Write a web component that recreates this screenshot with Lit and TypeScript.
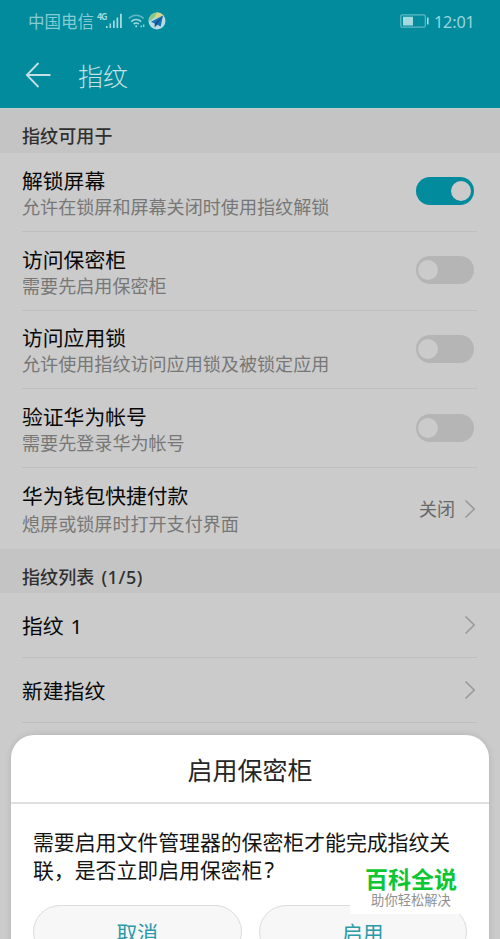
import { LitElement, html, css, nothing } from "lit";
import { customElement, property } from "lit/decorators.js";

@customElement("toggle-switch")
class ToggleSwitch extends LitElement {
  @property({ type: Boolean, reflect: true }) on = false;
  static styles = css`
    :host { display: flex; align-items: center; box-sizing: border-box; width: 58.5px; height: 28px; padding: 0 3px 0 2px; border-radius: 14px; background: #b5b5b5; }
    :host([on]) { justify-content: flex-end; background: #018b9d; }
    .knob { width: 20px; height: 20px; border-radius: 50%; background: #cbcbcb; }
  `;
  render() { return html`<div class="knob"></div>`; }
}

@customElement("setting-row")
class SettingRow extends LitElement {
  @property() heading = "";
  @property() detail = "";
  @property() value = "";
  @property() kind = "link";
  @property({ type: Boolean }) checked = false;
  static styles = css`
    :host { display: flex; box-sizing: border-box; margin: 0 23px 0 22px; border-bottom: 1.5px solid #bebebe; align-items: center; }
    .text { flex: 1; white-space: nowrap; padding-top: 2px; }
    .heading { font-size: 20.8px; line-height: 28px; color: #080808; word-spacing: 1.5px; }
    .detail { font-size: 18.08px; line-height: 24px; color: #777; }
    :host(.wallet) .text { padding-top: 3px; }
    :host(.wallet) .detail { line-height: 28px; }
    .value { font-size: 18px; line-height: 24px; color: #686868; margin-right: 9px; }
    toggle-switch { margin: 0 3px 1px 0; }
    svg { display: block; margin-right: 1px; }
  `;
  render() {
    return html`
      <div class="text">
        <div class="heading">${this.heading}</div>
        ${this.detail ? html`<div class="detail">${this.detail}</div>` : nothing}
      </div>
      ${this.value ? html`<div class="value">${this.value}</div>` : nothing}
      ${this.kind === "toggle"
        ? html`<toggle-switch ?on=${this.checked}></toggle-switch>`
        : html`<svg width="12" height="20" viewBox="0 0 12 20" fill="none" stroke="#9a9a9a" stroke-width="1.7"><path d="M1.5 1.5l8.7 8.5-8.7 8.5"/></svg>`}
    `;
  }
}

@customElement("app-root")
class AppRoot extends LitElement {
  static styles = css`
    :host { display: block; position: relative; width: 500px; height: 939px; overflow: hidden; background: #cbcbcb; font-family: "Noto Sans", "Noto Sans CJK SC", sans-serif; }
    .top { height: 108px; background: #018b9d; color: #a2d8dc; }
    .status { display: flex; align-items: center; height: 42px; padding: 0 25px 0 28px; font-family: "Noto Sans CJK SC", sans-serif; font-size: 16.5px; line-height: 24px; }
    .status svg { display: block; }
    .carrier { width: 69px; white-space: nowrap; color: #86cdd3; }
    .net { display: block; font-size: 9px; line-height: 10px; font-weight: 700; width: 8px; margin-top: -9px; letter-spacing: -1.2px; }
    .wifi { margin-left: 5px; }
    .app { margin-left: 2px; }
    .battery { margin-left: auto; }
    .clock { margin: 1px 0 0 5px; font-family: "Noto Sans", sans-serif; width: 41px; font-size: 16.2px; letter-spacing: -.15px; color: #9bd6da; }
    .bar { display: flex; align-items: center; height: 66px; padding-left: 25px; }
    .bar h1 { margin: 2px 0 0 27px; font-size: 25px; line-height: 36px; font-weight: 300; color: #c4e0e2; }
    .section { display: flex; align-items: center; height: 44px; padding: 12px 22px 0; box-sizing: border-box; background: #c4c4c4; color: #303030; font-size: 18px; line-height: 26px; font-weight: 500; letter-spacing: .1px; }
    .count { margin-left: 7px; letter-spacing: .55px; }
    .first { height: 45px; padding-top: 10px; border-top: 1px solid #bcd0d0; }
    .tall { height: 78.75px; }
    .wallet { height: 81px; border-bottom: 0; }
    .short { height: 65px; }
    .dialog { position: absolute; left: 11px; right: 11px; top: 735px; height: 230px; background: #fff; border-radius: 23px 23px 0 0; box-shadow: 0 0 6px rgba(0,0,0,.12); }
    .dialog h2 { margin: 0; height: 69px; box-sizing: border-box; padding-top: 17px; text-align: center; font-size: 25px; line-height: 36px; font-weight: 400; color: #262626; border-bottom: 2px solid #dfdfdf; }
    .message { margin: 0; padding: 25px 0 0 22px; font-size: 20.87px; line-height: 27.5px; color: #151515; white-space: nowrap; }
    .message .line { display: block; }
    .mark-q { font-size: 22px; line-height: 1; margin-left: 2px; }
    .actions { display: flex; gap: 17px; padding: 21px 22px 0; }
    .action { flex: 1; height: 54px; box-sizing: border-box; border: 1px solid #dcdcdc; border-radius: 27px; background: #f7f7f7; text-align: center; color: #2c9aa9; font-size: 20.8px; line-height: 54px; }
    .brand { position: absolute; left: 350px; top: 862px; width: 122px; height: 52px; background: #fff; text-align: center; white-space: nowrap; }
    .brand b { display: block; font-size: 23px; line-height: 34px; font-weight: 700; color: #0dc634; }
    .brand span { display: block; font-size: 13.3px; line-height: 16px; color: #919191; margin-top: -4px; }
  `;
  render() {
    return html`
      <header class="top">
        <div class="status">
          <span class="carrier">中国电信</span><span class="net">4G</span>
          <svg width="18" height="16" viewBox="0 0 18 16" fill="#a6dce0"><path d="M1 13h1.6v2H1zM4.5 10.5h1.6V15H4.5zM8 7.5h1.7V15H8zM11.5 4.5h1.7V15h-1.7zM15 .8h1.8V15H15z"/></svg>
          <svg class="wifi" width="18" height="16" viewBox="0 0 18 16" fill="none" stroke="#9cd6da" stroke-width="1.7"><path opacity=".6" d="M.8 5.5a10 10 0 0 1 14.8 0"/><path d="M3.3 8.6a6.8 6.8 0 0 1 9.8 0M5.6 11.2a3.7 3.7 0 0 1 5.2 0"/><circle cx="8.2" cy="13.3" r="1.1" fill="#9cd6da" stroke="none"/><path stroke-width="1.3" d="M13.2 12.3v2M15.7 11.5v2.5"/></svg>
          <svg class="app" width="18" height="18" viewBox="0 0 18 18"><circle cx="9" cy="9" r="8.5" fill="#b7dce2"/><path d="M.6 8A8.5 8.5 0 0 1 9 .5L7 5 2 9z" fill="#8fc684"/><path d="M9 .5A8.5 8.5 0 0 1 16 4L9 6 7 5z" fill="#d8d684"/><path d="M15 3.5L3 9.8l3.7 1.8 6 2.8z" fill="#1673b8"/><path d="M15 3.5L6.7 11.6v3.8l2.3-2.7z" fill="#164f8e"/></svg>
          <svg class="battery" width="29" height="14" viewBox="0 0 29 14"><rect x=".8" y=".8" width="24.5" height="12.4" rx="1.5" fill="none" stroke="#62bbc4" stroke-width="1.2"/><path fill="#a2dadd" d="M3 2.7h10v8.8H3zM27 3.5h1.6v7H27z"/></svg>
          <span class="clock">12:01</span>
        </div>
        <div class="bar">
          <svg width="26" height="26" viewBox="0 0 26 26" fill="none" stroke="#c4e0e2" stroke-width="1.8"><path d="M25.5 13H2M13.5 1L1.8 13l11.7 12"/></svg>
          <h1>指纹</h1>
        </div>
      </header>
      <div class="section first">指纹可用于</div>
      <setting-row class="tall" kind="toggle" checked heading="解锁屏幕" detail="允许在锁屏和屏幕关闭时使用指纹解锁"></setting-row>
      <setting-row class="tall" kind="toggle" heading="访问保密柜" detail="需要先启用保密柜"></setting-row>
      <setting-row class="tall" kind="toggle" heading="访问应用锁" detail="允许使用指纹访问应用锁及被锁定应用"></setting-row>
      <setting-row class="tall" kind="toggle" heading="验证华为帐号" detail="需要先登录华为帐号"></setting-row>
      <setting-row class="wallet" heading="华为钱包快捷付款" detail="熄屏或锁屏时打开支付界面" value="关闭"></setting-row>
      <div class="section">指纹列表<span class="count">(1/5)</span></div>
      <setting-row class="short" heading="指纹 1"></setting-row>
      <setting-row class="short" heading="新建指纹"></setting-row>
      <section class="dialog">
        <h2>启用保密柜</h2>
        <p class="message"><span class="line">需要启用文件管理器的保密柜才能完成指纹关</span><span class="line">联，是否立即启用保密柜<span class="mark-q">?</span></span></p>
        <div class="actions"><div class="action">取消</div><div class="action">启用</div></div>
      </section>
      <div class="brand"><b>百科全说</b><span>助你轻松解决</span></div>
    `;
  }
}
